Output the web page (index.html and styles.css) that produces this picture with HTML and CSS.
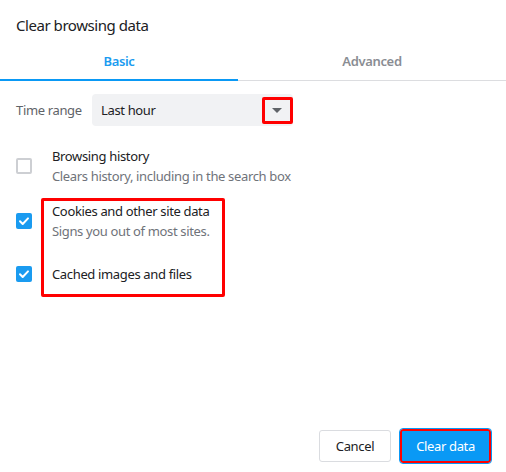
FILE: index.html
```html
<!DOCTYPE html>
<html lang="en">
<head>
<meta charset="utf-8">
<title>Clear browsing data</title>
<link rel="stylesheet" href="styles.css">
</head>
<body>
<div class="dialog">
  <h1 class="title">Clear browsing data</h1>
  <div class="tabs">
    <div class="tab active">Basic</div>
    <div class="tab">Advanced</div>
  </div>
  <div class="content">
    <div class="range-row">
      <span class="range-label">Time range</span>
      <div class="select">
        <span class="select-value">Last hour</span>
        <span class="select-arrow"></span>
        <span class="highlight highlight-arrow"></span>
      </div>
    </div>
    <div class="options">
      <div class="option">
        <span class="check"></span>
        <div class="option-text">
          <div class="option-title">Browsing history</div>
          <div class="option-sub">Clears history, including in the search box</div>
        </div>
      </div>
      <div class="option option-cookies">
        <span class="check checked">
          <svg viewBox="0 0 16 16" width="16" height="16"><path d="M4 8.3 L6.7 11 L12 5.4" fill="none" stroke="#fff" stroke-width="2" stroke-linecap="round" stroke-linejoin="round"/></svg>
        </span>
        <div class="option-text">
          <div class="option-title">Cookies and other site data</div>
          <div class="option-sub">Signs you out of most sites.</div>
        </div>
      </div>
      <div class="option option-cache">
        <span class="check checked">
          <svg viewBox="0 0 16 16" width="16" height="16"><path d="M4 8.3 L6.7 11 L12 5.4" fill="none" stroke="#fff" stroke-width="2" stroke-linecap="round" stroke-linejoin="round"/></svg>
        </span>
        <div class="option-text">
          <div class="option-title">Cached images and files</div>
        </div>
      </div>
      <span class="highlight highlight-options"></span>
    </div>
  </div>
  <div class="actions">
    <button class="btn btn-cancel">Cancel</button>
    <button class="btn btn-primary">Clear data</button>
  </div>
</div>
</body>
</html>
```

FILE: styles.css
```css
* { box-sizing: border-box; }
html, body { margin: 0; padding: 0; background: #fff; }
body {
  font-family: "Noto Sans", "Open Sans", sans-serif;
  font-size: 13px;
  letter-spacing: -0.35px;
  color: #202124;
}
.dialog {
  width: 506px;
  height: 472px;
  display: flex;
  flex-direction: column;
}
.title {
  margin: 0;
  padding: 15px 16px 0;
  font-size: 15px;
  font-weight: 400;
  line-height: 20px;
  letter-spacing: -0.45px;
  color: #202124;
}
.tabs {
  margin-top: 16px;
  display: grid;
  grid-template-columns: 238px 1fr;
  border-bottom: 1px solid #dcdde0;
}
.tab {
  text-align: center;
  font-weight: 600;
  font-size: 13px;
  line-height: 18px;
  color: #8a8d93;
  padding: 1px 0 9px;
  border-bottom: 2px solid transparent;
  margin-bottom: -1px;
}
.tab.active {
  color: #1a9bf0;
  border-bottom-color: #0a99f5;
}
.content {
  padding: 13px 16px 0;
  flex: 1;
}
.range-row {
  display: flex;
  align-items: center;
}
.range-label {
  width: 76px;
  color: #5f6368;
}
.select {
  position: relative;
  width: 201px;
  height: 32px;
  background: #f1f2f4;
  border-radius: 4px;
  display: flex;
  align-items: center;
  padding-left: 9px;
}
.select-value { flex: 1; }
.select-arrow {
  width: 0;
  height: 0;
  border-left: 5px solid transparent;
  border-right: 5px solid transparent;
  border-top: 5px solid #5f6368;
  margin-right: 11px;
  margin-top: 1px;
}
.highlight {
  position: absolute;
  border: 3px solid #ff0000;
  border-radius: 2px;
  pointer-events: none;
}
.highlight-arrow {
  left: 170px;
  top: 3px;
  width: 31px;
  height: 27px;
}
.options {
  position: relative;
  margin-top: 20px;
}
.option {
  display: flex;
  align-items: center;
  gap: 20px;
}
.option-cookies { margin-top: 15px; }
.option-cache { margin-top: 23px; }
.check {
  flex: none;
  width: 16px;
  height: 16px;
  border: 2px solid #cdcfd3;
  border-radius: 2px;
  display: flex;
}
.check.checked {
  background: #1a9bf0;
  border: none;
}
.option-text { line-height: 20px; }
.option-title { color: #202124; }
.option-sub { color: #6f737a; }
.highlight-options {
  left: 25px;
  top: 52px;
  width: 184px;
  height: 99px;
}
.actions {
  display: flex;
  justify-content: flex-end;
  gap: 9px;
  padding: 0 15px 9px;
}
.btn {
  font-family: inherit;
  font-size: 13px;
  letter-spacing: -0.35px;
  border-radius: 3px;
  cursor: pointer;
}
.btn-cancel {
  width: 72px;
  height: 32px;
  background: #fff;
  border: 1px solid #dadce0;
  color: #202124;
  margin-top: 1px;
}
.btn-primary {
  width: 91px;
  height: 34px;
  background: #0a99f5;
  color: #fff;
  border: 2px solid #ff0000;
  outline: 1px solid #0a99f5;
}
```
